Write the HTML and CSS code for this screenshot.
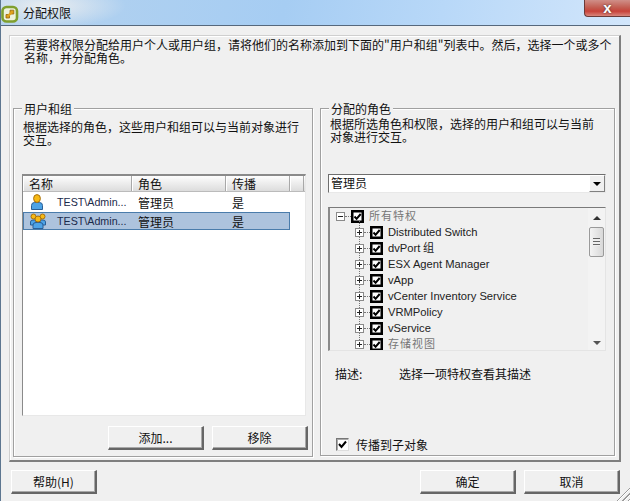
FILE: index.html
```html
<!DOCTYPE html>
<html lang="zh-CN">
<head>
<meta charset="utf-8">
<title>分配权限</title>
<link rel="stylesheet" href="styles.css">
</head>
<body>
<svg class="defs" width="0" height="0">
  <defs>
    <symbol id="tick" viewBox="0 0 13 13">
      <rect x="1.25" y="1.25" width="10.5" height="10.5" fill="#fff" stroke="#000" stroke-width="2.5"/>
      <path d="M3.5 6.5 L5.6 8.8 L9.7 4" fill="none" stroke="#000" stroke-width="2"/>
    </symbol>
    <symbol id="person" viewBox="0 0 14 16">
      <path d="M1.5 15.5 V11.5 Q1.5 8.5 4.5 8.5 H9.5 Q12.5 8.5 12.5 11.5 V15.5 Z" fill="#4da3e6" stroke="#2a5f96"/>
      <ellipse cx="7" cy="4.5" rx="3.4" ry="3.9" fill="#f7b914" stroke="#a8700c"/>
    </symbol>
  </defs>
</svg>
<div class="window">
  <header class="titlebar">
    <svg class="app-icon" width="18" height="18" viewBox="0 0 18 18">
      <rect x="1.5" y="2" width="14.5" height="14.500" rx="4" fill="#eef2dc" stroke="#7f9f2e" stroke-width="2.600"/>
      <path d="M5 13 H8.500 V9.500 H5 Z M9 9 H12.800 V5.200 H9 Z" fill="#e0a11c" stroke="#94660f" stroke-width=".8"/>
      <path d="M7.500 10.500 L10.500 7.500" stroke="#e0a11c" stroke-width="2.400"/>
    </svg>
    <span class="title">分配权限</span>
    <button class="close" type="button">x</button>
  </header>
  <div class="content">
    <main class="panel">
      <p class="intro">若要将权限分配给用户个人或用户组，请将他们的名称添加到下面的"用户和组"列表中。然后，选择一个或多个名称，并分配角色。</p>
      <div class="groups">
        <section class="group group-left">
          <h2 class="legend">用户和组</h2>
          <p class="group-text">根据选择的角色，这些用户和组可以与当前对象进行交互。</p>
          <div class="list">
            <div class="list-head">
              <span class="col col-name">名称</span>
              <span class="col col-role">角色</span>
              <span class="col col-prop">传播</span>
              <span class="col col-rest"></span>
            </div>
            <div class="list-row">
              <span class="cell-icon"><svg class="icon-user"><use href="#person"/></svg></span>
              <span class="cell-user">TEST\Admin...</span>
              <span class="cell-role">管理员</span>
              <span class="cell-prop">是</span>
            </div>
            <div class="list-row list-row-selected">
              <span class="cell-icon">
                <svg class="icon-group" viewBox="0 0 16 16">
                  <path d="M.5 12 V9 Q.5 7 3 7 H6 V12 Z M15.500 12 V9 Q15.500 7 13 7 H10 V12 Z" fill="#4da3e6" stroke="#2a5f96"/>
                  <circle cx="3.500" cy="3.500" r="2.500" fill="#f7b914" stroke="#a8700c"/>
                  <circle cx="12.500" cy="3.500" r="2.500" fill="#f7b914" stroke="#a8700c"/>
                  <path d="M3 15.500 V12 Q3 9.500 6 9.500 H10 Q13 9.500 13 12 V15.500 Z" fill="#4da3e6" stroke="#2a5f96"/>
                  <circle cx="8" cy="6" r="3" fill="#f7b914" stroke="#a8700c"/>
                </svg>
              </span>
              <span class="cell-user">TEST\Admin...</span>
              <span class="cell-role">管理员</span>
              <span class="cell-prop">是</span>
            </div>
          </div>
          <div class="list-actions">
            <button class="btn" type="button">添加...</button>
            <button class="btn" type="button">移除</button>
          </div>
        </section>
        <section class="group group-right">
          <h2 class="legend">分配的角色</h2>
          <p class="group-text">根据所选角色和权限，选择的用户和组可以与当前对象进行交互。</p>
          <div class="combo">
            <span class="combo-value">管理员</span>
            <span class="combo-arrow"></span>
          </div>
          <div class="tree">
            <ul class="tree-rows">
              <li class="node node-root"><i class="exp exp-open"></i><svg class="chk"><use href="#tick"/></svg><span class="label label-spaced">所有特权</span></li>
              <li class="node"><i class="exp"></i><svg class="chk"><use href="#tick"/></svg><span class="label">Distributed Switch</span></li>
              <li class="node"><i class="exp"></i><svg class="chk"><use href="#tick"/></svg><span class="label">dvPort 组</span></li>
              <li class="node"><i class="exp"></i><svg class="chk"><use href="#tick"/></svg><span class="label">ESX Agent Manager</span></li>
              <li class="node"><i class="exp"></i><svg class="chk"><use href="#tick"/></svg><span class="label">vApp</span></li>
              <li class="node"><i class="exp"></i><svg class="chk"><use href="#tick"/></svg><span class="label">vCenter Inventory Service</span></li>
              <li class="node"><i class="exp"></i><svg class="chk"><use href="#tick"/></svg><span class="label">VRMPolicy</span></li>
              <li class="node"><i class="exp"></i><svg class="chk"><use href="#tick"/></svg><span class="label">vService</span></li>
              <li class="node"><i class="exp"></i><svg class="chk"><use href="#tick"/></svg><span class="label label-spaced">存储视图</span></li>
            </ul>
            <div class="scrollbar">
              <span class="arrow-up"></span>
              <span class="thumb"><span class="grip"></span></span>
              <span class="arrow-down"></span>
            </div>
          </div>
          <div class="desc">
            <span class="desc-key">描述:</span>
            <span>选择一项特权查看其描述</span>
          </div>
          <label class="propagate">
            <span class="small-check"><svg width="9" height="9" viewBox="0 0 9 9"><path d="M1 4 L3.500 7 L8 1.500" fill="none" stroke="#000" stroke-width="2"/></svg></span>
            <span>传播到子对象</span>
          </label>
        </section>
      </div>
    </main>
    <footer class="footer">
      <button class="btn btn-help" type="button">帮助(H)</button>
      <div class="footer-right">
        <button class="btn" type="button">确定</button>
        <button class="btn" type="button">取消</button>
      </div>
    </footer>
  </div>
  <span class="resize-grip"></span>
</div>
</body>
</html>
```
FILE: styles.css
```css
* { box-sizing: border-box; }
html, body { margin: 0; padding: 0; }
body {
  width: 630px;
  height: 501px;
  overflow: hidden;
  font: 12px/13px "Noto Sans CJK SC", "Liberation Sans", sans-serif;
  color: #111;
  background: #f0f0f0;
}
.defs { position: absolute; }
p, h2, ul { margin: 0; padding: 0; font-weight: normal; font-size: inherit; }
ul { list-style: none; }

.window {
  position: relative;
  width: 630px;
  height: 501px;
  display: flex;
  flex-direction: column;
  background: #f0f0f0;
  border-left: 1px solid #5d7690;
}
.titlebar {
  flex: none;
  height: 26px;
  display: flex;
  align-items: center;
  border-bottom: 1px solid #56687c;
  background:
    radial-gradient(ellipse 80px 22px at 45px 6px, rgba(240,240,240,.9), rgba(240,240,240,0)),
    linear-gradient(100deg, #b4d2ee 0%, #a6cdf3 45%, #b8d8f8 70%, #d2e6fb 100%);
}
.app-icon { flex: none; margin-top: 3px; }
.title { margin-left: 4px; font-size: 12px; }
.close {
  margin-left: auto;
  align-self: flex-start;
  width: 46px;
  height: 17px;
  padding: 0;
  border: 1px solid #6b3a38;
  border-top: 0;
  border-right: 0;
  border-radius: 0 0 0 4px;
  background: linear-gradient(#cf8f88, #c25a4e 50%, #c8423a 70%, #d8867c);
  color: #fff;
  font: bold 15px/14px "Liberation Sans", sans-serif;
  text-shadow: 0 0 2px #333;
}

.content {
  flex: 1;
  display: flex;
  flex-direction: column;
  padding: 9px 8px 7px 8px;
}
.panel {
  flex: none;
  width: 612px;
  height: 427px;
  padding: 1px 4px 3px 3px;
  border-style: solid;
  border-color: #cfcfcf #7f7f7f #7f7f7f #cfcfcf;
  border-width: 1px 2px 2px 1px;
  box-shadow: inset 1px 1px 0 #fff;
  display: flex;
  flex-direction: column;
}
.intro {
  flex: none;
  height: 71px;
  padding: 1px 0 0 11px;
  line-height: 13px;
}
.groups {
  flex: 1;
  display: flex;
  gap: 7px;
}
.group {
  position: relative;
  border: 1px solid #a0a0a0;
  box-shadow: inset 1px 1px 0 #fff, 1px 1px 0 #fff;
  padding: 13px 7px 0 7px;
  display: flex;
  flex-direction: column;
}
.group-left { width: 300px; height: 349px; padding-left: 8px; }
.group-right { width: 295px; height: 348px; }
.legend {
  position: absolute;
  top: -7px;
  left: 8px;
  padding: 0 2px;
  background: #f0f0f0;
  line-height: 14px;
}
.group-text {
  flex: none;
  height: 52px;
  padding-left: 2px;
  margin-top: -2px;
  line-height: 13px;
}
.group-left .group-text { width: 285px; height: 54px; padding-left: 1px; }
.group-right .group-text { width: 275px; height: 57px; margin-top: -5px; }

.list {
  flex: none;
  width: 284px;
  height: 242px;
  background: #fff;
  border-style: solid;
  border-color: #8a8a8a #e8e8e8 #e8e8e8 #8a8a8a;
  border-width: 2px 1px 1px 1px;
}
.list-head {
  display: flex;
  height: 16px;
  background: linear-gradient(#fdfdfd, #dcdcdc);
  border-bottom: 1px solid #bbb;
}
.col {
  flex: none;
  padding-left: 5px;
  line-height: 15px;
  border-right: 1px solid #a8a8a8;
  border-left: 1px solid #fff;
}
.col-name { width: 109px; }
.col-role { width: 94px; }
.col-prop { width: 64px; }
.col-rest { width: 14px; }
.list-row {
  display: flex;
  align-items: center;
  width: 267px;
  height: 20px;
}
.list-row-selected {
  height: 18px;
  background: #adc3dd;
  outline: 1px solid #4a7cab;
  outline-offset: -1px;
}
.cell-icon { flex: none; width: 34px; padding-left: 7px; display: flex; align-items: center; }
.icon-user { width: 14px; height: 16px; }
.icon-group { width: 16px; height: 16px; }
.cell-user { flex: none; width: 81px; font: 10.7px/13px "Liberation Sans", sans-serif; color: #1a2a4a; }
.cell-role { flex: none; width: 94px; }
.cell-prop { flex: none; width: 30px; }

.list-actions {
  flex: none;
  display: flex;
  justify-content: flex-end;
  gap: 8px;
  margin-top: 10px;
  margin-right: -3px;
}
.btn {
  width: 96px;
  height: 24px;
  padding: 0;
  background: #f0f0f0;
  border-style: solid;
  border-color: #fff #666 #666 #fff;
  border-width: 1px 2px 2px 1px;
  box-shadow: inset -1px -1px 0 #a8a8a8;
  font: 12px/13px "Noto Sans CJK SC", "Liberation Sans", sans-serif;
  color: #111;
}
.combo {
  flex: none;
  display: flex;
  justify-content: space-between;
  width: 278px;
  height: 19px;
  background: #fff;
  border-style: solid;
  border-color: #6e6e6e #e8e8e8 #e8e8e8 #6e6e6e;
  border-width: 1px;
  line-height: 16px;
}
.combo-value { padding-left: 2px; }
.combo-arrow {
  position: relative;
  width: 16px;
  height: 17px;
  background: #f0f0f0;
  border: 1px solid;
  border-color: #fff #808080 #808080 #fff;
}
.combo-arrow::after {
  content: "";
  position: absolute;
  left: 3px;
  top: 6px;
  border: 4px solid transparent;
  border-top: 4px solid #000;
  border-bottom: 0;
}
.tree {
  flex: none;
  display: flex;
  width: 278px;
  height: 144px;
  margin-top: 14px;
  border-style: solid;
  border-color: #7a7a7a #e4e4e4 #e4e4e4 #8a8a8a;
  border-width: 1px 1px 1px 2px;
  overflow: hidden;
}
.tree-rows {
  flex: 1;
  min-width: 0;
  overflow: hidden;
  font: 11.2px/13px "Liberation Sans", sans-serif;
  color: #222;
}
.node {
  position: relative;
  display: flex;
  align-items: center;
  height: 16px;
  padding-left: 25px;
}
.node-root { padding-left: 6px; }
.exp {
  position: relative;
  flex: none;
  width: 9px;
  height: 9px;
  margin-right: 6px;
  border: 1px solid #8a8a8a;
  background:
    linear-gradient(#222, #222) center / 5px 1px no-repeat,
    linear-gradient(#222, #222) center / 1px 5px no-repeat,
    #fff;
}
.exp-open { background: linear-gradient(#222, #222) center / 5px 1px no-repeat, #fff; }
.exp::after {
  content: "";
  position: absolute;
  left: 8px;
  top: 3px;
  width: 6px;
  border-top: 1px dotted #777;
}
.node:not(.node-root)::before {
  content: "";
  position: absolute;
  left: 29px;
  top: -3px;
  height: 7px;
  border-left: 1px dotted #777;
}
.chk { flex: none; width: 13px; height: 13px; }
.label { margin-left: 5px; white-space: nowrap; }
.label-spaced {
  margin-top: -1px;
  color: #777;
  letter-spacing: 1px;
  font: 11px/13px "Noto Sans CJK SC", sans-serif;
}
.scrollbar {
  flex: none;
  position: relative;
  width: 17px;
  display: flex;
  flex-direction: column;
  align-items: center;
  background: #f3f3f3;
}
.arrow-up {
  margin-top: 8px;
  border: 4px solid transparent;
  border-bottom: 4px solid #333;
  border-top: 0;
}
.thumb {
  flex: none;
  width: 15px;
  height: 30px;
  margin-top: 7px;
  display: flex;
  align-items: center;
  justify-content: center;
  border: 1px solid #9a9a9a;
  border-radius: 2px;
  background: linear-gradient(90deg, #f4f4f4, #d8d8d8);
}
.grip {
  width: 7px;
  height: 8px;
  background: repeating-linear-gradient(#666 0 1px, #eee 1px 3px);
}
.arrow-down {
  margin-top: auto;
  margin-bottom: 5px;
  border: 4px solid transparent;
  border-top: 4px solid #555;
  border-bottom: 0;
}
.desc {
  flex: none;
  display: flex;
  height: 20px;
  margin-top: 16px;
  padding-left: 7px;
}
.desc-key { width: 64px; }
.propagate {
  flex: none;
  display: flex;
  align-items: center;
  gap: 7px;
  margin-top: 51px;
  padding-left: 8px;
}
.small-check {
  flex: none;
  width: 13px;
  height: 13px;
  display: flex;
  align-items: center;
  justify-content: center;
  background: #fff;
  border: 1px solid;
  border-color: #777 #ddd #ddd #777;
  box-shadow: inset 1px 1px 0 #aaa;
}

.footer {
  flex: none;
  display: flex;
  justify-content: space-between;
  margin-top: 8px;
  margin-left: 2px;
  margin-right: 2px;
}
.btn-help { width: 86px; }
.footer-right { display: flex; gap: 8px; }
.resize-grip {
  position: absolute;
  right: 0;
  bottom: 0;
  width: 14px;
  height: 14px;
  background: repeating-linear-gradient(135deg, transparent 0 2px, #9a9a9a 2px 3px, #fff 3px 4px);
  clip-path: polygon(100% 0, 100% 100%, 0 100%);
}
```
